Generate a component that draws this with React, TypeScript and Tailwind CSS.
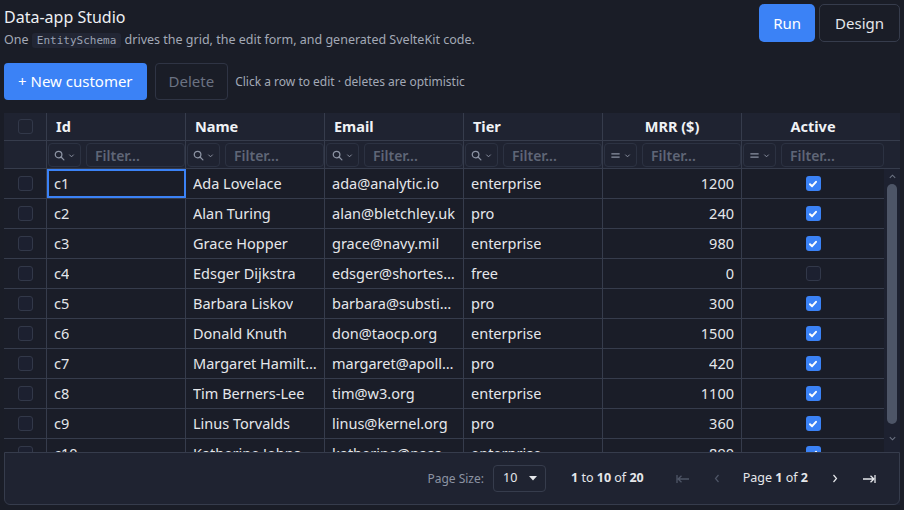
import React from "react";

type Customer = {
  id: string;
  name: string;
  email: string;
  tier: string;
  mrr: number;
  active: boolean;
};

const rows: Customer[] = [
  { id: "c1", name: "Ada Lovelace", email: "ada@analytic.io", tier: "enterprise", mrr: 1200, active: true },
  { id: "c2", name: "Alan Turing", email: "alan@bletchley.uk", tier: "pro", mrr: 240, active: true },
  { id: "c3", name: "Grace Hopper", email: "grace@navy.mil", tier: "enterprise", mrr: 980, active: true },
  { id: "c4", name: "Edsger Dijkstra", email: "edsger@shortest.path", tier: "free", mrr: 0, active: false },
  { id: "c5", name: "Barbara Liskov", email: "barbara@substitution.org", tier: "pro", mrr: 300, active: true },
  { id: "c6", name: "Donald Knuth", email: "don@taocp.org", tier: "enterprise", mrr: 1500, active: true },
  { id: "c7", name: "Margaret Hamilton", email: "margaret@apollo.nasa", tier: "pro", mrr: 420, active: true },
  { id: "c8", name: "Tim Berners-Lee", email: "tim@w3.org", tier: "enterprise", mrr: 1100, active: true },
  { id: "c9", name: "Linus Torvalds", email: "linus@kernel.org", tier: "pro", mrr: 360, active: true },
  { id: "c10", name: "Katherine Johnson", email: "katherine@nasa.gov", tier: "enterprise", mrr: 890, active: true },
];

const cols = "grid grid-cols-[43px_139px_139px_139px_139px_139px_142px]";

function SearchIcon() {
  return (
    <svg width="11" height="11" viewBox="0 0 12 12" fill="none" stroke="currentColor" strokeWidth="1.4">
      <circle cx="5" cy="5" r="3.6" />
      <path d="M7.7 7.7L10.8 10.8" strokeLinecap="round" />
    </svg>
  );
}

function EqualsIcon() {
  return (
    <svg width="11" height="11" viewBox="0 0 12 12" fill="none" stroke="currentColor" strokeWidth="1.5">
      <path d="M1.5 4.2H10.5M1.5 7.8H10.5" />
    </svg>
  );
}

function Chevron() {
  return (
    <svg width="7" height="7" viewBox="0 0 8 8" fill="none" stroke="currentColor" strokeWidth="1.1">
      <path d="M1.5 3L4 5.5L6.5 3" />
    </svg>
  );
}

function Check({ on }: { on: boolean }) {
  if (!on) {
    return <div className="h-[15px] w-[15px] rounded-[3px] border border-[#323849] bg-[#1c2030]" />;
  }
  return (
    <div className="flex h-[15px] w-[15px] items-center justify-center rounded-[3px] bg-[#3b82f6]">
      <svg width="10" height="10" viewBox="0 0 10 10" fill="none" stroke="white" strokeWidth="2" strokeLinecap="round" strokeLinejoin="round">
        <path d="M2 5.2L4.1 7.2L8 2.8" />
      </svg>
    </div>
  );
}

function FilterCell({ eq, last }: { eq?: boolean; last?: boolean }) {
  return (
    <div className={`flex items-center gap-[5px] py-[2px] pl-[1px] ${last ? "" : "border-r border-[#363c4c]"}`}>
      <div className="flex h-[24px] w-[33px] shrink-0 items-center justify-center gap-[3px] rounded-[4px] border border-[#2c3242] text-[#8c93a3]">
        {eq ? <EqualsIcon /> : <SearchIcon />}
        <Chevron />
      </div>
      <div className="flex h-[24px] flex-1 items-center rounded-[4px] border border-[#2c3242] px-[8px] text-[14px] font-semibold text-[#5f6677]">
        Filter...
      </div>
    </div>
  );
}

function Cell({ children, right, center, last, selected }: { children?: React.ReactNode; right?: boolean; center?: boolean; last?: boolean; selected?: boolean }) {
  return (
    <div
      className={`flex min-w-0 items-center overflow-hidden whitespace-nowrap px-[7px] ${right ? "justify-end" : ""} ${center ? "justify-center" : ""} ${last ? "" : "border-r border-[#363c4c]"} ${selected ? "outline-2 -outline-offset-2 outline-[#3b82f6]" : ""}`}
    >
      <span className="block min-w-0 overflow-hidden text-ellipsis">{children}</span>
    </div>
  );
}

export default function App() {
  return (
    <div className="h-[510px] w-[904px] overflow-hidden bg-[#1a1d27] px-1 pt-1 font-['Segoe_UI','Noto_Sans',sans-serif] text-[#e5e7eb]">
      {/* top bar */}
      <div className="flex items-start justify-between">
        <div className="pt-[1px]">
          <h1 className="text-[16px] leading-[24px] font-normal text-[#eef0f4]">Data-app Studio</h1>
          <p className="mt-[1px] text-[12.5px] leading-[20px] text-[#a3a9b6]">
            One{" "}
            <code className="rounded-[3px] bg-[#222634] px-[5px] py-[1px] font-['DejaVu_Sans_Mono',monospace] text-[11px] text-[#9aa2b3]">
              EntitySchema
            </code>{" "}
            drives the grid, the edit form, and generated SvelteKit code.
          </p>
        </div>
        <div className="flex gap-[4px]">
          <button className="h-[38px] rounded-[5px] bg-[#3b82f6] px-[14px] text-[15px] text-white">Run</button>
          <button className="h-[38px] rounded-[5px] border border-[#363c4c] px-[15px] text-[15px] text-[#e5e7eb]">Design</button>
        </div>
      </div>

      {/* toolbar */}
      <div className="mt-[12px] flex items-center gap-[8px]">
        <button className="h-[37px] rounded-[4px] bg-[#3b82f6] px-[14px] text-[15px] text-white">+ New customer</button>
        <button className="h-[37px] rounded-[4px] border border-[#2f3444] px-[13px] text-[15px] text-[#6b7282]">Delete</button>
        <span className="ml-[-1px] text-[12px] text-[#a3a9b6]">Click a row to edit · deletes are optimistic</span>
      </div>

      {/* grid */}
      <div className="relative mt-[13px] h-[392px] w-[896px] overflow-hidden text-[14.5px]">
        {/* header */}
        <div className={`${cols} h-[28px] border-b border-[#363c4c] bg-[#1f2331] text-[14.5px] font-bold text-[#f0f2f5]`}>
          <div className="flex items-center justify-center border-r border-[#363c4c]">
            <div className="h-[15px] w-[15px] rounded-[3px] border border-[#323849]" />
          </div>
          <div className="flex items-center border-r border-[#363c4c] px-[9px]">Id</div>
          <div className="flex items-center border-r border-[#363c4c] px-[9px]">Name</div>
          <div className="flex items-center border-r border-[#363c4c] px-[9px]">Email</div>
          <div className="flex items-center border-r border-[#363c4c] px-[9px]">Tier</div>
          <div className="flex items-center justify-center border-r border-[#363c4c]">MRR ($)</div>
          <div className="flex items-center justify-center">Active</div>
        </div>
        {/* filter row */}
        <div className={`${cols} h-[28px] border-b border-[#363c4c] bg-[#1f2331]`}>
          <div className="border-r border-[#363c4c]" />
          <FilterCell />
          <FilterCell />
          <FilterCell />
          <FilterCell />
          <FilterCell eq />
          <FilterCell eq last />
        </div>

        {/* body */}
        <div className="flex h-[336px]">
          <div className="w-[880px] overflow-hidden">
            {rows.map((r, i) => (
              <div key={r.id} className={`${cols} h-[30px] border-b border-[#363c4c] bg-[#1a1d28]`}>
                <div className="flex items-center justify-center border-r border-[#363c4c]">
                  <div className="h-[15px] w-[15px] rounded-[3px] border border-[#323849] bg-[#1c2030]" />
                </div>
                <Cell selected={i === 0}>{r.id}</Cell>
                <Cell>{r.name}</Cell>
                <Cell>{r.email}</Cell>
                <Cell>{r.tier}</Cell>
                <Cell right>{r.mrr}</Cell>
                <Cell center last>
                  <Check on={r.active} />
                </Cell>
              </div>
            ))}
          </div>
          {/* scrollbar */}
          <div className="flex w-[16px] flex-col items-center bg-[#1d2130] pt-[3px]">
            <svg width="9" height="9" viewBox="0 0 10 10" fill="none" stroke="#6b7282" strokeWidth="1.2">
              <path d="M2 6.5L5 3.5L8 6.5" />
            </svg>
            <div className="mt-[3px] h-[240px] w-[10px] rounded-full bg-[#4d5567]" />
            <svg className="mt-[10px]" width="9" height="9" viewBox="0 0 10 10" fill="none" stroke="#6b7282" strokeWidth="1.2">
              <path d="M2 3.5L5 6.5L8 3.5" />
            </svg>
          </div>
        </div>

        {/* footer / pagination */}
        <div className="absolute bottom-0 left-0 flex h-[53px] w-[896px] items-center justify-end rounded-b-[6px] border border-[#363c4c] bg-[#1f2331] pr-[23px] text-[12.5px]">
          <span className="text-[12px] text-[#8c93a3]">Page Size:</span>
          <div className="ml-[9px] flex h-[27px] w-[53px] items-center justify-between rounded-[4px] border border-[#363c4c] pl-[9px] pr-[8px] text-[#e5e7eb]">
            <span>10</span>
            <svg width="8" height="5" viewBox="0 0 8 5" fill="#e5e7eb">
              <path d="M0 0H8L4 4.5Z" />
            </svg>
          </div>
          <span className="ml-[25px] text-[#e5e7eb]">
            <b>1</b> to <b>10</b> of <b>20</b>
          </span>
          <svg className="ml-[32px]" width="14" height="10" viewBox="0 0 14 10" fill="none" stroke="#4e5566" strokeWidth="1.3">
            <path d="M1 1V9M2 5H13M2 5L5.5 1.8M2 5L5.5 8.2" />
          </svg>
          <svg className="ml-[24px]" width="6" height="9" viewBox="0 0 6 9" fill="none" stroke="#4e5566" strokeWidth="1.2">
            <path d="M4.5 1L1.5 4.5L4.5 8" />
          </svg>
          <span className="ml-[23px] text-[#e5e7eb]">
            Page <b>1</b> of <b>2</b>
          </span>
          <svg className="ml-[24px]" width="6" height="9" viewBox="0 0 6 9" fill="none" stroke="#e5e7eb" strokeWidth="1.2">
            <path d="M1.5 1L4.5 4.5L1.5 8" />
          </svg>
          <svg className="ml-[24px]" width="14" height="10" viewBox="0 0 14 10" fill="none" stroke="#e5e7eb" strokeWidth="1.3">
            <path d="M13 1V9M1 5H12M12 5L8.5 1.8M12 5L8.5 8.2" />
          </svg>
        </div>
      </div>
    </div>
  );
}
